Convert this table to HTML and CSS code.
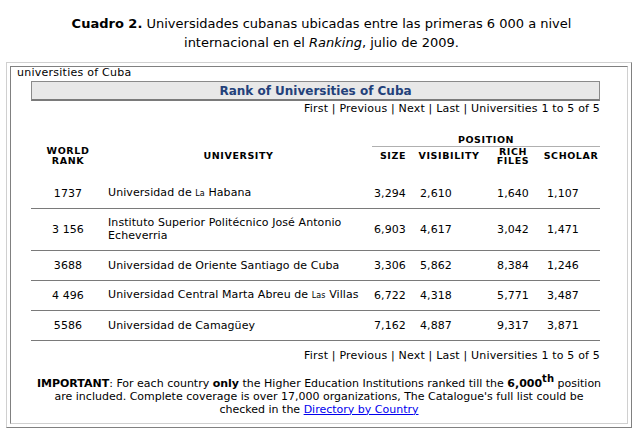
FILE: index.html
```html
<!DOCTYPE html>
<html>
<head>
<meta charset="utf-8">
<link rel="stylesheet" href="styles.css">
</head>
<body>
<div class="caption">
  <div><b>Cuadro 2.</b> Universidades cubanas ubicadas entre las primeras 6 000 a nivel</div>
  <div>internacional en el <i>Ranking</i>, julio de 2009.</div>
</div>
<div class="frame">
  <div class="frame-inner">
    <div class="label">universities of Cuba</div>
    <div class="content">
      <div class="title-box">Rank of Universities of Cuba</div>
      <div class="pager top">First | Previous | Next | Last | Universities 1 to 5 of 5</div>
      <table class="ranks">
        <colgroup>
          <col class="c-rank"><col class="c-univ"><col class="c-size"><col class="c-vis"><col class="c-rich"><col class="c-sch">
        </colgroup>
        <thead>
          <tr class="h-top">
            <th></th><th></th>
            <th colspan="4" class="position">POSITION</th>
          </tr>
          <tr class="h-main">
            <th class="h-rank">WORLD<br>RANK</th>
            <th>UNIVERSITY</th>
            <th>SIZE</th>
            <th>VISIBILITY</th>
            <th>RICH<br>FILES</th>
            <th>SCHOLAR</th>
          </tr>
          <tr class="h-gap"><th colspan="6"></th></tr>
        </thead>
        <tbody>
          <tr>
            <td class="rank">1737</td>
            <td class="univ">Universidad de <span class="sm">La</span> Habana</td>
            <td class="n-size">3,294</td><td class="n-vis">2,610</td><td class="n-rich">1,640</td><td class="n-sch">1,107</td>
          </tr>
          <tr class="two">
            <td class="rank">3 156</td>
            <td class="univ">Instituto Superior Politécnico José Antonio<br>Echeverria</td>
            <td class="n-size">6,903</td><td class="n-vis">4,617</td><td class="n-rich">3,042</td><td class="n-sch">1,471</td>
          </tr>
          <tr>
            <td class="rank">3688</td>
            <td class="univ">Universidad de Oriente Santiago de Cuba</td>
            <td class="n-size">3,306</td><td class="n-vis">5,862</td><td class="n-rich">8,384</td><td class="n-sch">1,246</td>
          </tr>
          <tr>
            <td class="rank">4 496</td>
            <td class="univ">Universidad Central Marta Abreu de <span class="sm">Las</span> Villas</td>
            <td class="n-size">6,722</td><td class="n-vis">4,318</td><td class="n-rich">5,771</td><td class="n-sch">3,487</td>
          </tr>
          <tr>
            <td class="rank">5586</td>
            <td class="univ">Universidad de Camagüey</td>
            <td class="n-size">7,162</td><td class="n-vis">4,887</td><td class="n-rich">9,317</td><td class="n-sch">3,871</td>
          </tr>
        </tbody>
      </table>
      <div class="pager bottom">First | Previous | Next | Last | Universities 1 to 5 of 5</div>
    </div>
    <p class="note"><b>IMPORTANT</b>: For each country <b>only</b> the Higher Education Institutions ranked till the <b>6,000<sup>th</sup></b> position<br>are included. Complete coverage is over 17,000 organizations, The Catalogue's full list could be<br>checked in the <a href="#">Directory by Country</a></p>
  </div>
</div>
</body>
</html>
```

FILE: styles.css
```css
html, body {
  margin: 0;
  padding: 0;
  background: #ffffff;
}
body {
  font-family: "DejaVu Sans", Verdana, sans-serif;
  color: #000;
  font-size: 11px;
}
.caption {
  text-align: center;
  font-size: 13px;
  line-height: 19px;
  padding-top: 14px;
  height: 48px;
}
.frame {
  margin-left: 6px;
  width: 626px;
  box-sizing: border-box;
  border: 1px solid;
  border-color: #d0d0d0 #808080 #808080 #d0d0d0;
  padding: 3px;
}
.frame-inner {
  border: 1px solid;
  border-color: #808080 #d0d0d0 #d0d0d0 #808080;
  padding-bottom: 7px;
}
.label {
  padding-left: 6px;
  line-height: 12px;
  height: 14px;
  letter-spacing: 0.25px;
}
.content {
  width: 569px;
  margin-left: 20px;
}
.title-box {
  background: #e8e8e8;
  border: 1px solid #8a8a8a;
  border-bottom: 2px solid #7a7a7a;
  height: 17px;
  line-height: 18px;
  text-align: center;
  font-weight: bold;
  font-size: 12px;
  color: #23417a;
}
.pager {
  text-align: right;
  line-height: 14px;
  letter-spacing: 0.18px;
}
.pager.top {
  margin-top: 1px;
}
.pager.bottom {
  margin-top: 8px;
}
.ranks {
  width: 569px;
  table-layout: fixed;
  border-collapse: collapse;
  margin-top: 19px;
}
.c-rank { width: 74px; }
.c-univ { width: 267px; }
.c-size { width: 42px; }
.c-vis { width: 70px; }
.c-rich { width: 58px; }
.c-sch { width: 58px; }
.ranks th {
  padding: 0;
  font-size: 9.5px;
  font-weight: bold;
  letter-spacing: 0.6px;
  line-height: 9.5px;
  text-align: center;
  vertical-align: middle;
  white-space: nowrap;
}
.h-top th { height: 8px; }
.ranks th.position {
  border-bottom: 1px solid #b0b0b0;
  padding-bottom: 1px;
}
.h-main th {
  height: 18px;
  padding-bottom: 4px;
}
.h-gap th { height: 9px; }
.ranks td {
  padding: 0;
  height: 29px;
  border-bottom: 1px solid #7a7a7a;
  vertical-align: middle;
  line-height: 13px;
  white-space: nowrap;
  letter-spacing: 0.08px;
}
.ranks tr.two td { height: 41px; }
.rank { text-align: center; }
.univ { padding-left: 3px !important; }
.sm { font-size: 8px; }
.n-size { padding-left: 2px !important; }
.n-vis { padding-left: 6px !important; }
.n-rich { text-align: center; }
.n-sch { padding-left: 5px !important; }
.note {
  margin: 14px 0 0;
  text-align: center;
  line-height: 13px;
}
.note sup {
  font-size: 10px;
  line-height: 0;
}
.note a {
  color: #0000ee;
}
```
